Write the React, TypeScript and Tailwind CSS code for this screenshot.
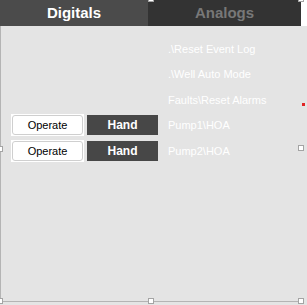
const labels = ['.\\Reset Event Log', '.\\Well Auto Mode', 'Faults\\Reset Alarms', 'Pump1\\HOA', 'Pump2\\HOA']

function Handle({ className }: { className: string }) {
    return <div className={`absolute w-[6px] h-[6px] bg-white border border-[#a4a4a4] ${className}`} />
}

function Controls() {
    return (
        <div className="flex items-center gap-[3px] pl-[10px]">
            <div className="bg-white p-[1px] w-[73px] h-[22px]">
                <div className="h-full border border-[#cfcfcf] rounded-[3px] flex items-center justify-center text-[11px] text-black">Operate</div>
            </div>
            <div className="w-[71px] h-[20px] bg-[#474747] flex items-center justify-center text-[12px] font-bold text-white">Hand</div>
        </div>
    )
}

export default function App() {
    return (
        <div className="relative w-[307px] h-[305px] bg-[#e4e4e4] overflow-hidden font-['Liberation_Sans',Arial,sans-serif]">
            <div className="flex w-[307px] h-[26px] bg-white">
                <div className="w-[148px] bg-[#4b4b4b] flex items-center justify-center text-[15px] font-bold text-white">Digitals</div>
                <div className="w-[153px] bg-[#333333] flex items-center justify-center text-[15px] font-bold text-[#787878]">Analogs</div>
            </div>

            <div className="w-[301px] h-[276px] border-l border-b border-[#b4b4b4] pt-[10px]">
                {labels.map((label, i) => (
                    <div key={label} className="flex items-center h-[25.5px]">
                        <div className="w-[167px]">{i >= 3 && <Controls />}</div>
                        <span className="text-[11px] text-white">{label}</span>
                    </div>
                ))}
            </div>

            <div className="absolute left-[302px] top-[103px] w-[3px] h-[3px] bg-[#e02424]" />

            <Handle className="left-[148px] top-[-4px]" />
            <Handle className="left-[298px] top-[-4px]" />
            <Handle className="left-[-3px] top-[146px]" />
            <Handle className="left-[298px] top-[145px]" />
            <Handle className="left-[-3px] top-[298px]" />
            <Handle className="left-[148px] top-[298px]" />
            <Handle className="left-[298px] top-[298px]" />
        </div>
    )
}
